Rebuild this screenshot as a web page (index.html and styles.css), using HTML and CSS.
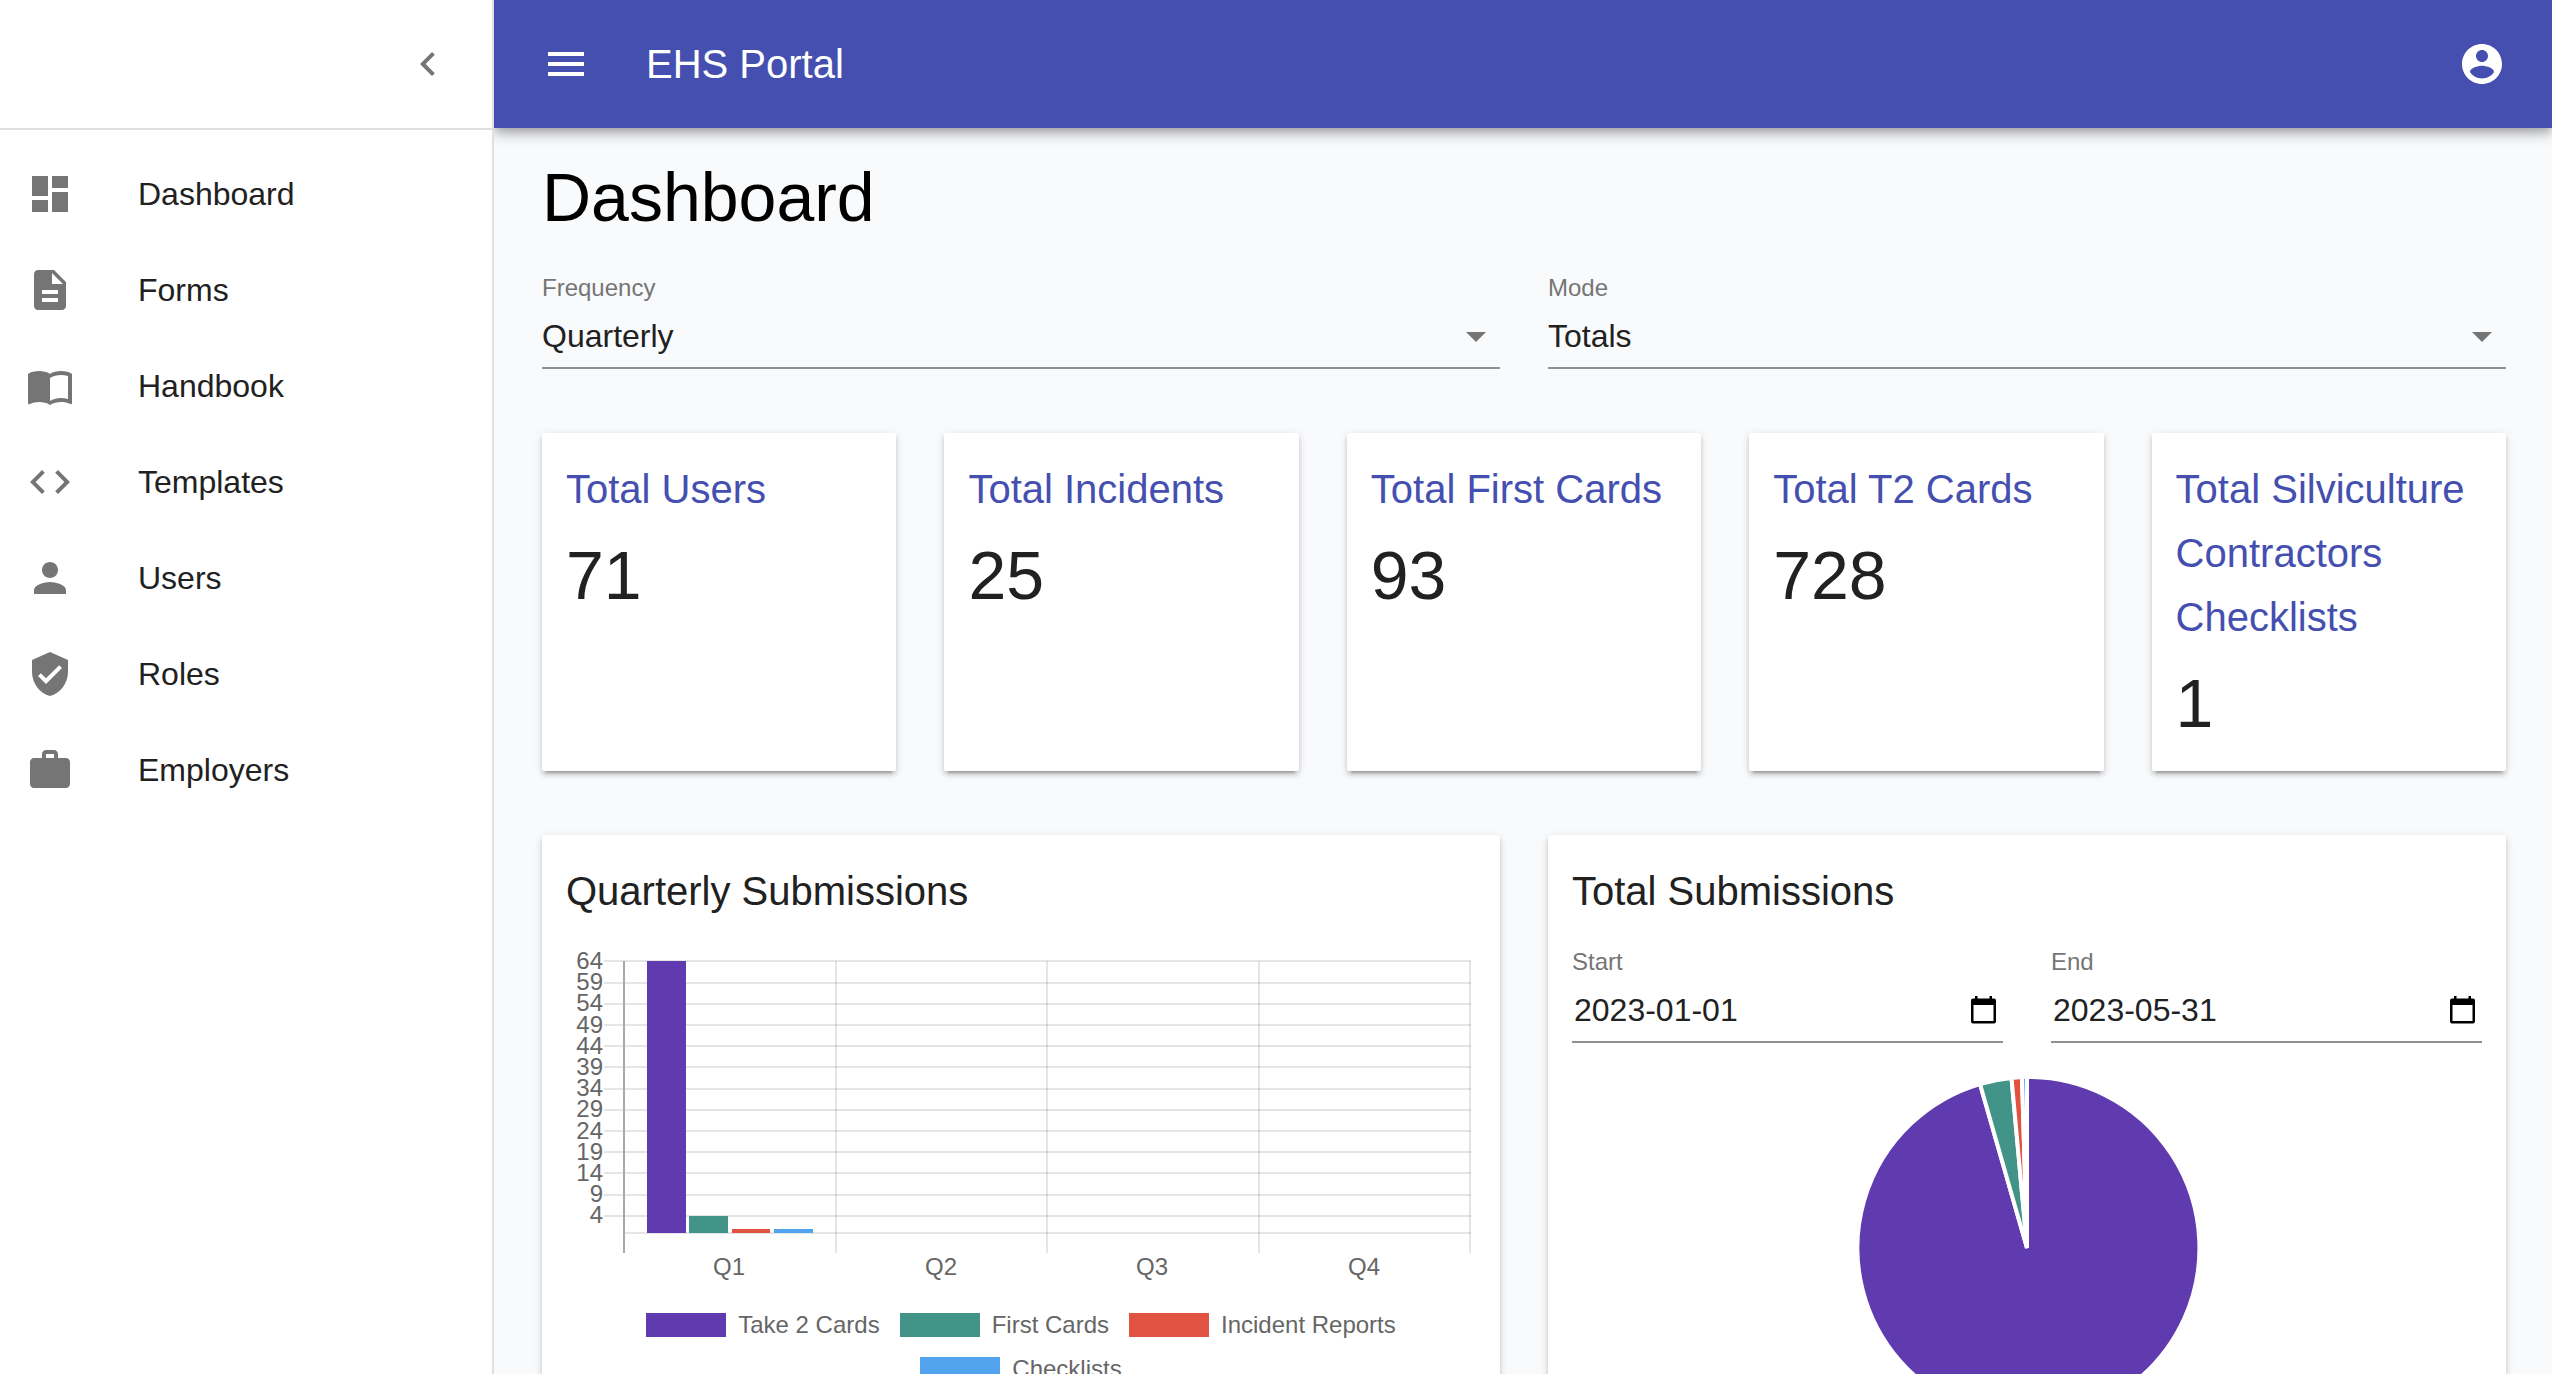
FILE: index.html
```html
<!DOCTYPE html>
<html lang="en">
<head>
<meta charset="utf-8">
<title>EHS Portal</title>
<link rel="stylesheet" href="styles.css">
</head>
<body>
<div class="app">
  <aside class="sidebar">
    <div class="sidebar-header">
      <button class="icon-button" type="button" aria-label="Collapse menu">
        <svg class="icon" viewBox="0 0 24 24"><path d="M15.41 7.41L14 6l-6 6 6 6 1.41-1.41L10.83 12z"/></svg>
      </button>
    </div>
    <nav class="nav">
      <a class="nav-item" href="#"><svg class="icon" viewBox="0 0 24 24"><path d="M3 13h8V3H3v10zm0 8h8v-6H3v6zm10 0h8V11h-8v10zm0-18v6h8V3h-8z"/></svg>Dashboard</a>
      <a class="nav-item" href="#"><svg class="icon" viewBox="0 0 24 24"><path d="M14 2H6c-1.100 0-1.990.9-1.990 2L4 20c0 1.100.89 2 1.990 2H18c1.100 0 2-.9 2-2V8l-6-6zm2 16H8v-2h8v2zm0-4H8v-2h8v2zm-3-5V3.500L18.500 9H13z"/></svg>Forms</a>
      <a class="nav-item" href="#"><svg class="icon" viewBox="0 0 24 24"><path d="M21 5c-1.110-.35-2.330-.5-3.500-.5-1.950 0-4.050.4-5.500 1.500-1.450-1.100-3.550-1.500-5.500-1.500S2.450 4.900 1 6v14.650c0 .25.25.5.5.5.1 0 .15-.05.25-.05C3.100 20.450 5.050 20 6.500 20c1.950 0 4.050.4 5.500 1.500 1.350-.85 3.800-1.500 5.500-1.500 1.650 0 3.350.3 4.750 1.050.1.050.15.050.25.050.25 0 .5-.25.5-.5V6c-.6-.45-1.250-.75-2-1zm0 13.500c-1.100-.35-2.300-.5-3.500-.5-1.700 0-4.150.65-5.500 1.500V8c1.350-.85 3.800-1.500 5.500-1.500 1.200 0 2.400.15 3.500.5v11.500z"/></svg>Handbook</a>
      <a class="nav-item" href="#"><svg class="icon" viewBox="0 0 24 24"><path d="M9.400 16.600L4.800 12l4.600-4.600L8 6l-6 6 6 6 1.400-1.400zm5.200 0l4.600-4.600-4.600-4.600L16 6l6 6-6 6-1.400-1.400z"/></svg>Templates</a>
      <a class="nav-item" href="#"><svg class="icon" viewBox="0 0 24 24"><path d="M12 12c2.210 0 4-1.790 4-4s-1.790-4-4-4-4 1.790-4 4 1.790 4 4 4zm0 2c-2.670 0-8 1.340-8 4v2h16v-2c0-2.660-5.330-4-8-4z"/></svg>Users</a>
      <a class="nav-item" href="#"><svg class="icon" viewBox="0 0 24 24"><path d="M12 1L3 5v6c0 5.550 3.840 10.740 9 12 5.160-1.260 9-6.450 9-12V5l-9-4zm-2 16l-4-4 1.410-1.410L10 14.170l6.590-6.590L18 9l-8 8z"/></svg>Roles</a>
      <a class="nav-item" href="#"><svg class="icon" viewBox="0 0 24 24"><path d="M20 6h-4V4c0-1.110-.89-2-2-2h-4c-1.110 0-2 .89-2 2v2H4c-1.110 0-2 .89-2 2v11c0 1.110.89 2 2 2h16c1.110 0 2-.89 2-2V8c0-1.110-.89-2-2-2zm-6 0h-4V4h4v2z"/></svg>Employers</a>
    </nav>
  </aside>

  <div class="page">
    <header class="app-bar">
      <button class="icon-button" type="button" aria-label="Open menu">
        <svg class="icon" viewBox="0 0 24 24"><path d="M3 18h18v-2H3v2zm0-5h18v-2H3v2zm0-7v2h18V6H3z"/></svg>
      </button>
      <span class="brand">EHS Portal</span>
      <button class="icon-button" type="button" aria-label="Account">
        <svg class="icon" viewBox="0 0 24 24"><path d="M12 2C6.480 2 2 6.480 2 12s4.480 10 10 10 10-4.480 10-10S17.520 2 12 2zm0 3c1.660 0 3 1.340 3 3s-1.340 3-3 3-3-1.340-3-3 1.340-3 3-3zm0 14.200c-2.500 0-4.710-1.280-6-3.220.03-1.990 4-3.080 6-3.080 1.990 0 5.970 1.090 6 3.080-1.290 1.940-3.500 3.220-6 3.220z"/></svg>
      </button>
    </header>

    <main class="content">
      <h1 class="page-title">Dashboard</h1>

      <div class="halves">
        <div class="field">
          <label class="field-label" for="frequency">Frequency</label>
          <div class="control">
            <select class="control-input" id="frequency"><option>Quarterly</option></select>
            <svg class="icon" viewBox="0 0 24 24"><path d="M7 10l5 5 5-5z"/></svg>
          </div>
        </div>
        <div class="field">
          <label class="field-label" for="mode">Mode</label>
          <div class="control">
            <select class="control-input" id="mode"><option>Totals</option></select>
            <svg class="icon" viewBox="0 0 24 24"><path d="M7 10l5 5 5-5z"/></svg>
          </div>
        </div>
      </div>

      <section class="stats">
        <article class="card"><h2 class="stat-title">Total Users</h2><p class="stat-value">71</p></article>
        <article class="card"><h2 class="stat-title">Total Incidents</h2><p class="stat-value">25</p></article>
        <article class="card"><h2 class="stat-title">Total First Cards</h2><p class="stat-value">93</p></article>
        <article class="card"><h2 class="stat-title">Total T2 Cards</h2><p class="stat-value">728</p></article>
        <article class="card"><h2 class="stat-title">Total Silviculture Contractors Checklists</h2><p class="stat-value">1</p></article>
      </section>

      <section class="halves">
        <article class="card">
          <h2 class="card-title">Quarterly Submissions</h2>
          <svg class="bar-chart" viewBox="0 0 910 350" role="img" aria-label="Submissions per quarter">
            <path class="grid-line" d="M38 38H905M38 60H905M38 81H905M38 102H905M38 123H905M38 144H905M38 166H905M38 187H905M38 208H905M38 229H905M38 250H905M38 272H905M38 293H905M58 310H905"/>
            <path class="grid-line" d="M270 38V330M481 38V330M693 38V330M904 38V330"/>
            <path class="axis-line" d="M58 38V330"/>
            <rect class="take2" x="81" y="38" width="39" height="272"/>
            <rect class="first" x="123" y="293" width="39" height="17"/>
            <rect class="incident" x="166" y="306" width="38" height="4"/>
            <rect class="checklist" x="208" y="306" width="39" height="4"/>
            <g class="tick tick-y">
              <text x="37" y="46">64</text><text x="37" y="67">59</text><text x="37" y="88">54</text>
              <text x="37" y="110">49</text><text x="37" y="131">44</text><text x="37" y="152">39</text>
              <text x="37" y="173">34</text><text x="37" y="194">29</text><text x="37" y="216">24</text>
              <text x="37" y="237">19</text><text x="37" y="258">14</text><text x="37" y="279">9</text>
              <text x="37" y="300">4</text>
            </g>
            <g class="tick tick-x">
              <text x="163" y="352">Q1</text><text x="375" y="352">Q2</text><text x="586" y="352">Q3</text><text x="798" y="352">Q4</text>
            </g>
          </svg>
          <ul class="legend">
            <li class="legend-item"><span class="swatch take2"></span>Take 2 Cards</li>
            <li class="legend-item"><span class="swatch first"></span>First Cards</li>
            <li class="legend-item"><span class="swatch incident"></span>Incident Reports</li>
            <li class="legend-item"><span class="swatch checklist"></span>Checklists</li>
          </ul>
        </article>

        <article class="card">
          <h2 class="card-title">Total Submissions</h2>
          <div class="halves date-range">
            <div class="field">
              <label class="field-label" for="start">Start</label>
              <div class="control date">
                <input class="control-input" id="start" type="text" value="2023-01-01">
                <button class="calendar-button" type="button" aria-label="Pick start date"><svg class="calendar" viewBox="0 0 25 28"><path fill-rule="evenodd" d="M4 0h2.500v2.500h12V0H21v2.500h2a2 2 0 0 1 2 2v21a2 2 0 0 1-2 2H2a2 2 0 0 1-2-2v-21a2 2 0 0 1 2-2h2zM2.500 9v16h20V9z"/></svg></button>
              </div>
            </div>
            <div class="field">
              <label class="field-label" for="end">End</label>
              <div class="control date">
                <input class="control-input" id="end" type="text" value="2023-05-31">
                <button class="calendar-button" type="button" aria-label="Pick end date"><svg class="calendar" viewBox="0 0 25 28"><path fill-rule="evenodd" d="M4 0h2.500v2.500h12V0H21v2.500h2a2 2 0 0 1 2 2v21a2 2 0 0 1-2 2H2a2 2 0 0 1-2-2v-21a2 2 0 0 1 2-2h2zM2.500 9v16h20V9z"/></svg></button>
              </div>
            </div>
          </div>
          <svg class="pie" viewBox="-171 -171 342 342" role="img" aria-label="Share of submissions by type">
            <path class="take2" d="M0 0V-171A171 171 0 1 1 -47 -164Z"/>
            <path class="first" d="M0 0L-47 -164A171 171 0 0 1 -15.500 -170Z"/>
            <path class="incident" d="M0 0L-15.500 -170A171 171 0 0 1 -5 -171Z"/>
            <path class="checklist" d="M0 0L-5 -171H0Z"/>
          </svg>
        </article>
      </section>
    </main>
  </div>
</div>
</body>
</html>
```
FILE: styles.css
```css
* {
  box-sizing: border-box;
}

body {
  margin: 0;
  font-family: "Liberation Sans", Arial, Helvetica, sans-serif;
  font-size: 32px;
  color: #212121;
  background: #f9fafc;
}

h1, h2, p, ul {
  margin: 0;
  padding: 0;
  font-weight: 400;
}

.app {
  display: flex;
  height: 100vh;
  overflow: hidden;
}

.icon {
  flex: none;
  display: block;
  width: 48px;
  height: 48px;
  fill: currentColor;
}

.icon-button {
  display: block;
  padding: 24px;
  border: 0;
  background: none;
  color: inherit;
}

/* Sidebar */
.sidebar {
  position: relative;
  z-index: 2;
  flex: none;
  width: 494px;
  border-right: 2px solid #e0e0e0;
  background: #fff;
}

.sidebar-header {
  display: flex;
  align-items: center;
  justify-content: flex-end;
  height: 130px;
  padding: 0 16px;
  border-bottom: 2px solid #e0e0e0;
  color: #757575;
}

.nav {
  padding: 16px 0;
}

.nav-item {
  display: flex;
  align-items: center;
  gap: 64px;
  height: 96px;
  padding: 0 26px;
  color: #212121;
  text-decoration: none;
}

.nav-item .icon {
  color: #757575;
}

/* Top bar */
.page {
  flex: 1;
  min-width: 0;
}

.app-bar {
  position: relative;
  display: flex;
  align-items: center;
  height: 128px;
  padding: 0 22px 0 24px;
  background: #444fb0;
  color: #fff;
  box-shadow: 0 4px 8px -2px rgba(0, 0, 0, 0.2), 0 8px 10px rgba(0, 0, 0, 0.14), 0 2px 20px rgba(0, 0, 0, 0.12);
}

.brand {
  flex: 1;
  padding-left: 32px;
  font-size: 40px;
}

/* Content */
.content {
  padding: 27px 46px 48px 48px;
}

.page-title {
  margin-bottom: 34px;
  font-size: 68px;
  line-height: 84px;
  color: #000;
}

.halves {
  display: grid;
  grid-template-columns: repeat(2, minmax(0, 1fr));
  gap: 48px;
}

.field-label {
  display: block;
  height: 32px;
  padding-top: 2px;
  font-size: 24px;
  line-height: 26px;
  color: #757575;
}

.control {
  display: flex;
  align-items: center;
  height: 64px;
  border-bottom: 2px solid #8e9193;
}

.control .icon {
  margin-left: -48px;
  color: #757575;
  pointer-events: none;
}

.control-input {
  flex: 1;
  min-width: 0;
  height: 60px;
  padding: 0;
  border: 0;
  outline: 0;
  appearance: none;
  background: none;
  color: inherit;
  font: inherit;
}

.date-range {
  margin-top: 24px;
}

.date .control-input {
  padding-left: 2px;
}

.calendar-button {
  padding: 0 7px;
  border: 0;
  background: none;
}

.calendar {
  display: block;
  width: 25px;
  height: 28px;
}

.card {
  padding: 24px;
  background: #fff;
  border-radius: 2px;
  box-shadow: 0 6px 2px -4px rgba(0, 0, 0, 0.2), 0 4px 4px rgba(0, 0, 0, 0.14), 0 2px 10px rgba(0, 0, 0, 0.12);
}

.stats {
  display: grid;
  grid-template-columns: repeat(5, minmax(0, 1fr));
  gap: 48px;
  margin: 64px 0;
}

.stat-title,
.card-title {
  font-size: 40px;
  line-height: 64px;
}

.stat-title {
  margin-bottom: 12px;
  color: #444fb0;
}

.stat-value {
  padding-bottom: 2px;
  font-size: 68px;
  line-height: 84px;
}

/* Charts */
.bar-chart {
  display: block;
  width: 100%;
  overflow: visible;
}

.grid-line {
  stroke: rgba(0, 0, 0, 0.1);
  stroke-width: 2;
}

.axis-line {
  stroke: #a8a8a8;
  stroke-width: 2;
}

.tick {
  font-size: 24px;
  fill: #666;
}

.tick-y {
  text-anchor: end;
}

.tick-x {
  text-anchor: middle;
}

.legend {
  display: flex;
  flex-wrap: wrap;
  justify-content: center;
  gap: 20px;
  padding-top: 40px;
  list-style: none;
  font-size: 24px;
  line-height: 24px;
  color: #666;
}

.legend-item {
  display: flex;
  gap: 12px;
}

.swatch {
  width: 80px;
  height: 24px;
}

.take2 {
  background: #603baf;
  fill: #603baf;
}

.first {
  background: #429488;
  fill: #429488;
}

.incident {
  background: #e15241;
  fill: #e15241;
}

.checklist {
  background: #52a3ee;
  fill: #52a3ee;
}

.pie {
  display: block;
  width: 342px;
  margin: 34px auto 0;
}

.pie path {
  stroke: #fff;
  stroke-width: 4;
  stroke-linejoin: bevel;
}
```
